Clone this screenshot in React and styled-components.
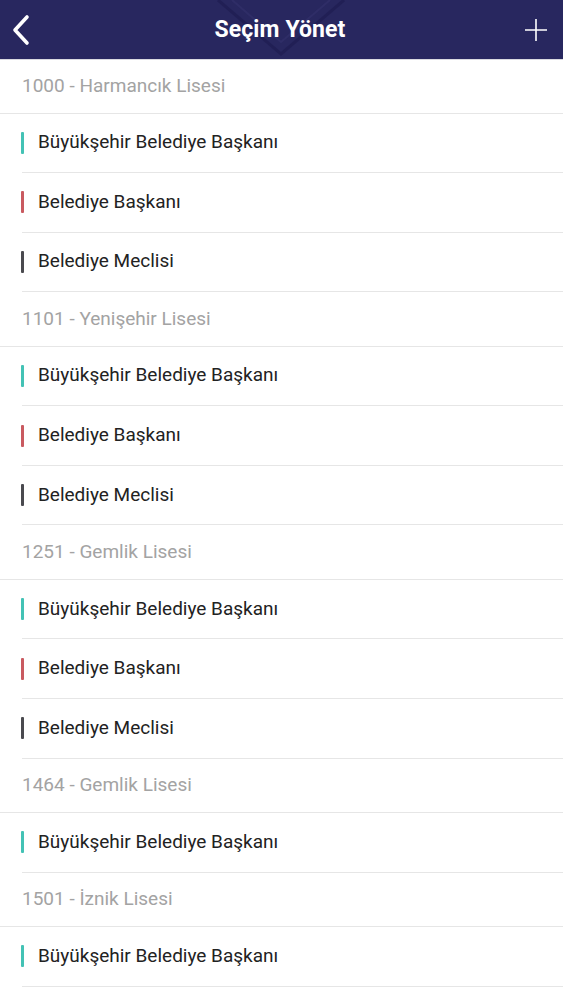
import React from "react";
import styled, { createGlobalStyle } from "styled-components";

const Global = createGlobalStyle`
  html, body { margin: 0; padding: 0; background: #ffffff; }
  body { font-family: Roboto, "Noto Sans", "Liberation Sans", sans-serif; }
  * { box-sizing: border-box; }
`;

const Page = styled.div`
  width: 563px;
  min-height: 1000px;
  background: #ffffff;
  display: flex;
  flex-direction: column;
`;

const Header = styled.header`
  position: relative;
  height: 60px;
  background: #28275f;
  border-bottom: 1px solid #d9d9e0;
  display: grid;
  grid-template-columns: 1fr auto 1fr;
  align-items: center;
  padding: 0 13px 0 7px;
  overflow: hidden;
`;

const Deco = styled.svg`
  position: absolute;
  left: 0;
  top: 0;
  pointer-events: none;
`;

const IconButton = styled.button`
  position: relative;
  z-index: 1;
  width: 28px;
  height: 40px;
  padding: 0;
  border: 0;
  background: transparent;
  display: flex;
  align-items: center;
  justify-content: center;
  justify-self: ${(p) => (p.$end ? "end" : "start")};
`;

const Title = styled.h1`
  position: relative;
  z-index: 1;
  margin: 0 0 0 3px;
  color: #ffffff;
  font-size: 23px;
  font-weight: 700;
  letter-spacing: 0.1px;
`;

const List = styled.div`
  display: flex;
  flex-direction: column;
`;

const SectionRow = styled.div`
  height: ${(p) => p.$h}px;
  display: flex;
  align-items: center;
  padding-left: 22px;
  padding-bottom: 1px;
  color: #a3a3a3;
  font-size: 19px;
  border-bottom: 1px solid #e6e6e6;
`;

const ItemRow = styled.div`
  height: 59.6px;
  display: flex;
  align-items: stretch;
  padding-left: 22px;
`;

const ItemInner = styled.div`
  flex: 1;
  display: flex;
  align-items: center;
  border-bottom: 1px solid #e6e6e6;
  padding-bottom: 2px;
`;

const Bar = styled.span`
  width: 3px;
  height: 22px;
  margin-left: -1px;
  margin-top: 2px;
  border-radius: 1px;
  background: ${(p) => p.$color};
  margin-right: 14px;
`;

const ItemText = styled.span`
  color: #222222;
  font-size: 19px;
`;

const colors = {
  buyuk: "#43c2b5",
  baskan: "#c95a60",
  meclis: "#4a4a4f",
};

const names = {
  buyuk: "Büyükşehir Belediye Başkanı",
  baskan: "Belediye Başkanı",
  meclis: "Belediye Meclisi",
};

const data = [
  { title: "1000 - Harmancık Lisesi", items: ["buyuk", "baskan", "meclis"], h: 53.5 },
  { title: "1101 - Yenişehir Lisesi", items: ["buyuk", "baskan", "meclis"], h: 54.4 },
  { title: "1251 - Gemlik Lisesi", items: ["buyuk", "baskan", "meclis"], h: 54.4 },
  { title: "1464 - Gemlik Lisesi", items: ["buyuk"], h: 54.4 },
  { title: "1501 - İznik Lisesi", items: ["buyuk"], h: 54.4 },
];

export default function App() {
  return (
    <Page>
      <Global />
      <Header>
        <Deco width="563" height="60" viewBox="0 0 563 60">
          <path d="M218 0 L281 54 L344 0" fill="none" stroke="#1f1e52" strokeWidth="3" opacity="0.8" />
          <path d="M232 0 L281 42 L330 0" fill="none" stroke="#33326d" strokeWidth="2" opacity="0.6" />
        </Deco>
        <IconButton aria-label="Geri">
          <svg width="20" height="32" viewBox="0 0 20 32">
            <path d="M16 3 L4 16 L16 29" fill="none" stroke="#ffffff" strokeWidth="3.6" strokeLinecap="round" strokeLinejoin="round" />
          </svg>
        </IconButton>
        <Title>Seçim Yönet</Title>
        <IconButton $end aria-label="Ekle">
          <svg width="24" height="24" viewBox="0 0 24 24">
            <path d="M12 1 V23 M1 12 H23" stroke="#ffffff" strokeWidth="1.6" />
          </svg>
        </IconButton>
      </Header>
      <List>
        {data.map((s) => (
          <React.Fragment key={s.title}>
            <SectionRow $h={s.h}>{s.title}</SectionRow>
            {s.items.map((k) => (
              <ItemRow key={k}>
                <ItemInner>
                  <Bar $color={colors[k]} />
                  <ItemText>{names[k]}</ItemText>
                </ItemInner>
              </ItemRow>
            ))}
          </React.Fragment>
        ))}
      </List>
    </Page>
  );
}
